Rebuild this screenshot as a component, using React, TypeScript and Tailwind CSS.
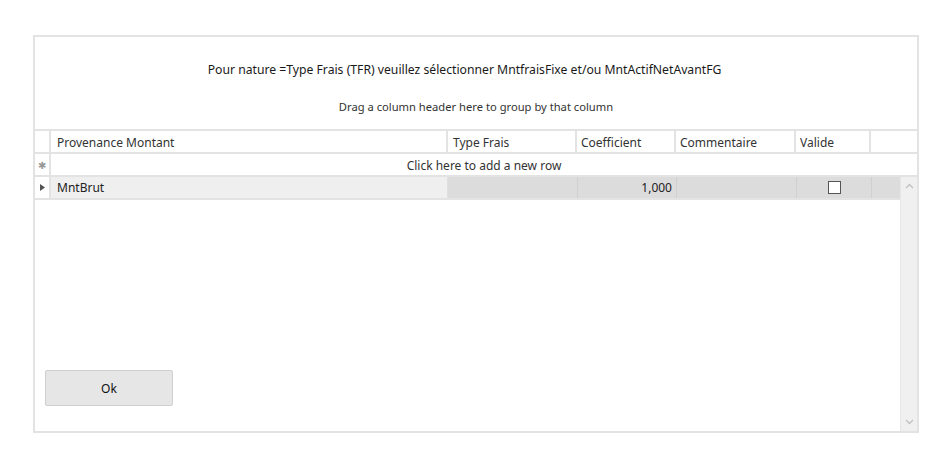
import React from "react";

const font = { fontFamily: '"Noto Sans", "Open Sans", sans-serif' };

export default function App() {
  return (
    <div className="w-[939px] h-[470px] bg-white relative" style={font}>
      <div className="absolute left-[33px] top-[35px] w-[886px] h-[398px] border-2 border-[#e3e3e3] flex flex-col">
        <div className="h-[92px] flex flex-col items-center">
          <div className="mt-[25px] mr-[23px] text-[12.2px] text-[#1a1a1a] leading-[16px]">
            Pour nature =Type Frais (TFR) veuillez sélectionner MntfraisFixe et/ou MntActifNetAvantFG
          </div>
          <div className="mt-[22px] text-[11.2px] text-[#333] leading-[14px]">
            Drag a column header here to group by that column
          </div>
        </div>
        {/* header */}
        <div className="flex h-[25px] border-t-2 border-b-2 border-[#e3e3e3] text-[12px] text-[#333] leading-[16px]">
          <div className="w-[16px] border-r-2 border-[#e3e3e3]" />
          <div className="w-[397px] border-r-2 border-[#e3e3e3] pl-[6px] pt-[4px]">Provenance Montant</div>
          <div className="w-[129px] border-r-2 border-[#e3e3e3] pl-[5px] pt-[4px]">Type Frais</div>
          <div className="w-[99px] border-r-2 border-[#e3e3e3] pl-[4px] pt-[4px]">Coefficient</div>
          <div className="w-[120px] border-r-2 border-[#e3e3e3] pl-[4px] pt-[4px]">Commentaire</div>
          <div className="w-[75px] border-r-2 border-[#e3e3e3] pl-[4px] pt-[4px]">Valide</div>
          <div className="flex-1" />
        </div>
        {/* new row */}
        <div className="flex h-[23px] border-b-2 border-[#e3e3e3] text-[12px] text-[#333] leading-[16px]">
          <div className="w-[16px] border-r-2 border-[#e3e3e3] flex items-center justify-center text-[#999] text-[10px]">✱</div>
          <div className="flex-1 flex justify-center pt-[4px]">Click here to add a new row</div>
        </div>
        {/* body */}
        <div className="flex-1 flex">
          <div className="flex-1 flex flex-col">
            <div className="flex h-[23px] border-b-2 border-[#e3e3e3] text-[12px] text-[#222] leading-[16px]">
              <div className="w-[16px] border-r-2 border-[#e3e3e3] flex items-center justify-center">
                <svg width="5" height="7" viewBox="0 0 5 7"><path d="M0 0 L5 3.5 L0 7 Z" fill="#555" /></svg>
              </div>
              <div className="w-[397px] bg-[#efefef] border-r border-[#e0e0e0] pl-[6px] pt-[3px]">MntBrut</div>
              <div className="w-[130px] bg-[#dcdcdc] border-r border-[#d0d0d0]" />
              <div className="w-[99px] bg-[#dcdcdc] border-r border-[#d0d0d0] flex justify-end pr-[4px] pt-[3px]">1,000</div>
              <div className="w-[120px] bg-[#dcdcdc] border-r border-[#d0d0d0]" />
              <div className="w-[75px] bg-[#dcdcdc] border-r border-[#d0d0d0] flex items-center justify-center">
                <div className="w-[13px] h-[13px] bg-white border border-[#555]" />
              </div>
              <div className="flex-1 bg-[#dcdcdc]" />
            </div>
            <div className="flex-1 relative">
              <button className="absolute left-[10px] top-[170px] w-[128px] h-[36px] bg-[#e6e6e6] border border-[#cfcfcf] rounded-[2px] text-[12px] text-[#111] pt-[2px]">
                Ok
              </button>
            </div>
          </div>
          <div className="w-[17px] bg-[#f0f0f0] border-l border-[#e6e6e6] flex flex-col justify-between items-center py-[6px]">
            <svg width="9" height="6" viewBox="0 0 9 6"><path d="M1 5 L4.5 1.5 L8 5" stroke="#c0c0c0" strokeWidth="1.3" fill="none" /></svg>
            <svg width="9" height="6" viewBox="0 0 9 6"><path d="M1 1 L4.5 4.5 L8 1" stroke="#c0c0c0" strokeWidth="1.3" fill="none" /></svg>
          </div>
        </div>
      </div>
    </div>
  );
}
